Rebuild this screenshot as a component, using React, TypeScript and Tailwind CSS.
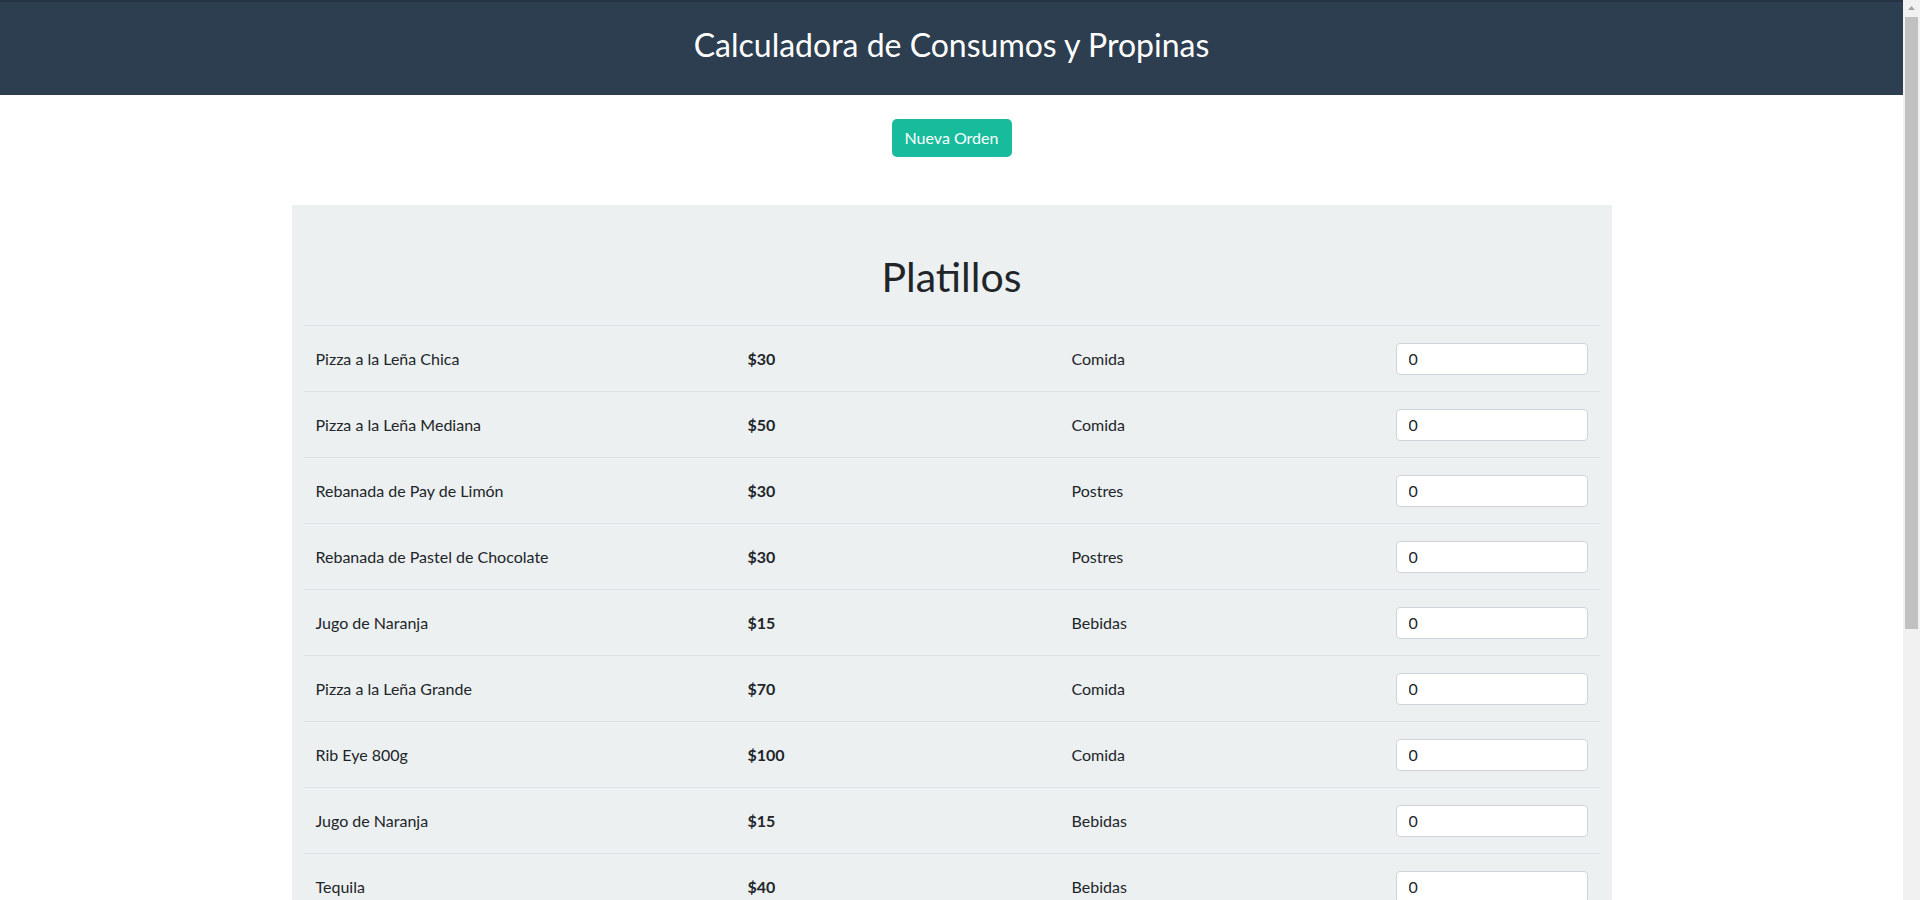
import React from "react";

const items = [
  { name: "Pizza a la Leña Chica", price: 30, cat: "Comida" },
  { name: "Pizza a la Leña Mediana", price: 50, cat: "Comida" },
  { name: "Rebanada de Pay de Limón", price: 30, cat: "Postres" },
  { name: "Rebanada de Pastel de Chocolate", price: 30, cat: "Postres" },
  { name: "Jugo de Naranja", price: 15, cat: "Bebidas" },
  { name: "Pizza a la Leña Grande", price: 70, cat: "Comida" },
  { name: "Rib Eye 800g", price: 100, cat: "Comida" },
  { name: "Jugo de Naranja", price: 15, cat: "Bebidas" },
  { name: "Tequila", price: 40, cat: "Bebidas" },
];

export default function App() {
  return (
    <div
      className="h-screen flex overflow-hidden bg-white text-[#212529] text-[16px]"
      style={{ fontFamily: "Lato, 'Noto Sans', sans-serif" }}
    >
      <div className="flex-1 min-w-0 overflow-hidden">
        <header className="bg-[#2c3e50] h-[95px] border-t-2 border-[#263544] flex items-center justify-center">
          <h1 className="text-white text-[32px] font-normal leading-none -mt-[8px]">
            Calculadora de Consumos y Propinas
          </h1>
        </header>

        <div className="flex justify-center mt-[24px]">
          <button className="bg-[#18bc9c] text-white text-[16px] h-[38px] w-[120px] rounded-[5px] leading-none">
            Nueva Orden
          </button>
        </div>

        <main className="w-[1320px] mx-auto mt-[48px] bg-[#ecf0f1] px-3 pb-6">
          <h2 className="text-[41px] font-normal text-center leading-none pt-[51px] pb-[28px] text-[#212529]">
            Platillos
          </h2>
          <div>
            {items.map((it, i) => (
              <div
                key={i}
                className="grid grid-cols-[432px_324px_324px_216px] items-center border-t border-[#dee2e6] h-[66px]"
              >
                <div className="px-3">{it.name}</div>
                <div className="px-3 font-bold">${it.price}</div>
                <div className="px-3">{it.cat}</div>
                <div className="px-3">
                  <input
                    type="number"
                    defaultValue={0}
                    className="w-full h-[32px] bg-white border border-[#ced4da] rounded-[4px] px-3 text-[16px] text-[#212529] outline-none [appearance:textfield] [&::-webkit-inner-spin-button]:appearance-none"
                  />
                </div>
              </div>
            ))}
          </div>
        </main>
      </div>

      <aside className="w-[17px] shrink-0 bg-[#f1f1f1] flex flex-col items-center">
        <svg width="17" height="17" viewBox="0 0 17 17" className="shrink-0">
          <path d="M5 10 L8.5 6 L12 10 Z" fill="#a3a3a3" />
        </svg>
        <div className="w-[13px] h-[612px] bg-[#c1c1c1]" />
      </aside>
    </div>
  );
}
